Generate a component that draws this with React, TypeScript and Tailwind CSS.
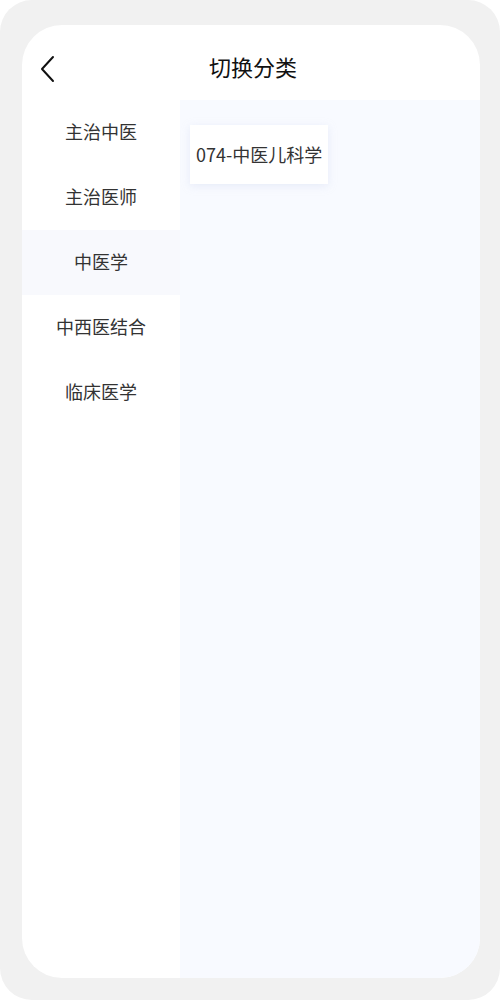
import { useState } from "react";

const categories = ["主治中医", "主治医师", "中医学", "中西医结合", "临床医学"];

const subjects = ["074-中医儿科学"];

export default function App() {
  const [active, setActive] = useState(2);

  return (
    <div className="w-[500px] h-[1000px] bg-white">
      <div className="w-full h-full rounded-[32px] bg-[#f1f1f1] pt-[25px] pb-[22px] pl-[22px] pr-[20px] flex">
        <div
          className="flex-1 flex flex-col rounded-[40px] bg-white overflow-hidden text-[#333]"
          style={{ fontFamily: '"Noto Sans CJK SC", "Noto Sans", sans-serif' }}
        >
          <header className="relative h-[75px] shrink-0 flex items-center justify-center">
            <button className="absolute left-[14px] top-[26px] p-1">
              <svg width="16" height="28" viewBox="0 0 16 28" fill="none">
                <path d="M13 2 L2 14 L13 26" stroke="#111" strokeWidth="2" strokeLinecap="round" strokeLinejoin="round" />
              </svg>
            </button>
            <h1 className="text-[22px] text-[#111] pt-[8px] ml-[4px]">切换分类</h1>
          </header>
          <div className="flex-1 flex">
            <nav className="w-[158px] shrink-0 flex flex-col">
              {categories.map((c, i) => (
                <div
                  key={c}
                  onClick={() => setActive(i)}
                  className={
                    i === active
                      ? "h-[65px] pb-[3px] flex items-center justify-center text-[18px] bg-[#f8f9fd]"
                      : "h-[65px] pb-[3px] flex items-center justify-center text-[18px]"
                  }
                >
                  {c}
                </div>
              ))}
            </nav>
            <section className="flex-1 bg-[#f8faff] pt-[25px] pl-[10px]">
              <div className="flex flex-wrap gap-3">
                {subjects.map((s) => (
                  <div
                    key={s}
                    className="h-[59px] px-[6px] flex items-center bg-white text-[18px] shadow-[0_2px_8px_rgba(200,210,235,0.35)]"
                  >
                    {s}
                  </div>
                ))}
              </div>
            </section>
          </div>
        </div>
      </div>
    </div>
  );
}
